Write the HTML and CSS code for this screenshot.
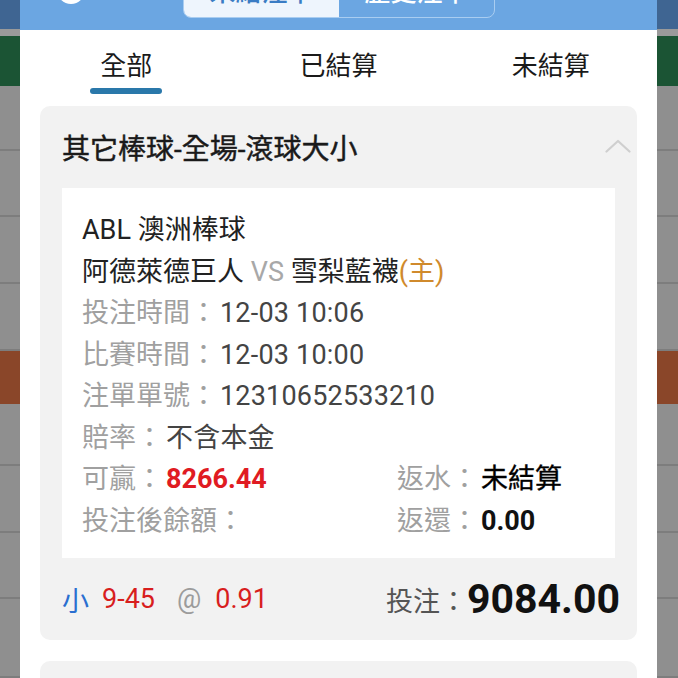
FILE: index.html
```html
<!DOCTYPE html>
<html lang="zh-Hant">
<head>
<meta charset="utf-8">
<title>注單</title>
<link rel="stylesheet" href="styles.css">
</head>
<body>
<div class="side side-left">
  <div class="bg-blue"></div>
  <div class="bg-stripe"></div>
  <div class="bg-green"></div>
  <div class="bg-row h65"></div>
  <div class="bg-row h67"></div>
  <div class="bg-row h68"></div>
  <div class="bg-row h67"></div>
  <div class="bg-brown"></div>
  <div class="bg-row h62"></div>
  <div class="bg-row h68"></div>
  <div class="bg-row h66"></div>
  <div class="bg-row h80"></div>
</div>

<div class="modal">
  <div class="mhead">
    <div class="back"></div>
    <div class="seg">
      <div class="seg-item seg-on">未結注單</div>
      <div class="seg-item">歷史注單</div>
    </div>
    <div class="close">×</div>
  </div>

  <div class="tabs">
    <div class="tab tab-active"><span>全部</span><i class="bar"></i></div>
    <div class="tab"><span>已結算</span></div>
    <div class="tab"><span>未結算</span></div>
  </div>

  <div class="card">
    <div class="card-title">
      <span>其它棒球-全場-滾球大小</span>
      <svg class="chev" width="26" height="14" viewBox="0 0 26 14"><path d="M1.5 12.5 L13 2 L24.5 12.5" fill="none" stroke="#cfcfcf" stroke-width="2.2" stroke-linecap="round" stroke-linejoin="round"/></svg>
    </div>
    <div class="inner">
      <div class="line dark">ABL 澳洲棒球</div>
      <div class="line dark">阿德萊德巨人 <span class="vs">VS</span> 雪梨藍襪<span class="home">(主)</span></div>
      <div class="line"><span class="lbl">投注時間：</span><span class="val">12-03 10:06</span></div>
      <div class="line"><span class="lbl">比賽時間：</span><span class="val">12-03 10:00</span></div>
      <div class="line"><span class="lbl">注單單號：</span><span class="val">12310652533210</span></div>
      <div class="line"><span class="lbl">賠率：</span><span class="val">不含本金</span></div>
      <div class="grid">
        <div class="line"><span class="lbl">可贏：</span><span class="win">8266.44</span></div>
        <div class="line"><span class="lbl">返水：</span><span class="strong">未結算</span></div>
        <div class="line"><span class="lbl">投注後餘額：</span></div>
        <div class="line"><span class="lbl">返還：</span><span class="bold">0.00</span></div>
      </div>
    </div>
    <div class="card-foot">
      <div class="pick">
        <span class="side-pick">小</span><span class="red hdp">9-45</span><span class="at">@</span><span class="red odds">0.91</span>
      </div>
      <div class="stake">
        <span class="stake-lbl">投注：</span><span class="stake-val">9084.00</span>
      </div>
    </div>
  </div>

  <div class="card card-next"></div>
</div>

<div class="side side-right">
  <div class="bg-blue"></div>
  <div class="bg-stripe"></div>
  <div class="bg-green"></div>
  <div class="bg-row h65"></div>
  <div class="bg-row h67"></div>
  <div class="bg-row h68"></div>
  <div class="bg-row h67"></div>
  <div class="bg-brown"></div>
  <div class="bg-row h62"></div>
  <div class="bg-row h68"></div>
  <div class="bg-row h66"></div>
  <div class="bg-row h80"></div>
</div>
</body>
</html>
```

FILE: styles.css
```css
* { box-sizing: border-box; }

html, body {
  margin: 0;
  padding: 0;
}

body {
  width: 678px;
  height: 678px;
  overflow: hidden;
  display: flex;
  background: #8f8f8f;
  font-family: Roboto, "Noto Sans CJK TC", "Noto Sans", sans-serif;
}

/* background page under the modal mask */
.side {
  display: flex;
  flex-direction: column;
  flex: none;
}
.side-left { width: 20px; }
.side-right { width: 21px; }

.bg-blue { height: 29px; background: #3f6592; }
.bg-stripe { height: 7px; background: #9a9a9a; }
.bg-green { height: 51px; background: #1b5434; }
.bg-brown { height: 54px; background: #8a4629; }
.bg-row { background: #8f8f8f; border-bottom: 2px solid #7d7d7d; }
.h62 { height: 62px; }
.h65 { height: 65px; }
.h66 { height: 66px; }
.h67 { height: 67px; }
.h68 { height: 68px; }
.h80 { height: 80px; }

/* modal */
.modal {
  width: 637px;
  flex: none;
  background: #fff;
  display: flex;
  flex-direction: column;
  overflow: hidden;
}

.mhead {
  height: 30px;
  flex: none;
  background: #6ba6e2;
  display: flex;
  align-items: flex-start;
  overflow: hidden;
}

.back {
  width: 28px;
  height: 28px;
  border-radius: 50%;
  background: #fff;
  margin-left: 37px;
  margin-top: -24px;
  flex: none;
}

.seg {
  margin-left: 98px;
  margin-top: -22px;
  width: 312px;
  height: 40px;
  border: 1.5px solid #a9cdf1;
  border-radius: 0 0 8px 8px;
  display: flex;
  overflow: hidden;
  flex: none;
}

.seg-item {
  flex: 1;
  text-align: center;
  font-size: 26px;
  line-height: 26px;
  color: #fff;
  font-weight: 500;
}

.seg-on {
  background: #eef5fd;
  color: #3a7cc4;
}

.close {
  margin-left: auto;
  margin-right: 33px;
  margin-top: -19px;
  color: #fff;
  font-size: 26px;
  line-height: 24px;
}

/* tabs */
.tabs {
  height: 70px;
  flex: none;
  display: flex;
}

.tab {
  flex: 1;
  display: flex;
  flex-direction: column;
  align-items: center;
  padding-top: 21px;
  font-size: 26px;
  line-height: 30px;
  color: #1a1a1a;
}

.bar {
  display: block;
  width: 72px;
  height: 6px;
  border-radius: 3px;
  background: #2a78aa;
  margin-top: 7px;
}

/* card */
.card {
  margin: 6px 20px 0;
  background: #f2f2f2;
  border-radius: 10px;
  flex: none;
}

.card-title {
  height: 82px;
  padding: 0 6px 0 22px;
  display: flex;
  align-items: center;
  justify-content: space-between;
  font-size: 28px;
  font-weight: 400;
  color: #1a1a1a;
  -webkit-text-stroke: 0.45px #1a1a1a;
}

.chev { display: block; margin-top: -2px; }

.inner {
  margin: 0 22px;
  background: #fff;
  padding: 22px 20px 16px;
  font-size: 27px;
  line-height: 41.5px;
}

.line {
  white-space: nowrap;
}

.dark { color: #222; }
.vs { color: #a8a8a8; }
.home { color: #d08a2c; }
.lbl { color: #a0a0a0; padding-right: 3px; }
.val { color: #444; letter-spacing: 0.2px; }
.win { color: #e01b22; font-weight: 700; }
.strong { color: #000; font-weight: 400; -webkit-text-stroke: 0.35px #000; }
.bold { color: #111; font-weight: 700; }

.grid {
  display: grid;
  grid-template-columns: 315px 1fr;
}

.card-foot {
  height: 82px;
  padding: 0 17px 0 22px;
  display: flex;
  align-items: center;
  justify-content: space-between;
  font-size: 27px;
}

.pick { display: flex; align-items: center; white-space: nowrap; }
.side-pick { color: #2a6fd0; }
.red { color: #d81e1e; }
.hdp { margin-left: 13px; }
.at { color: #9c9c9c; margin-left: 22px; }
.odds { margin-left: 14px; }

.stake { display: flex; align-items: center; white-space: nowrap; }
.stake-lbl { color: #555; }
.stake-val { color: #111; font-size: 41px; font-weight: 700; line-height: 48px; }

.card-next {
  margin-top: 21px;
  height: 60px;
}
```
